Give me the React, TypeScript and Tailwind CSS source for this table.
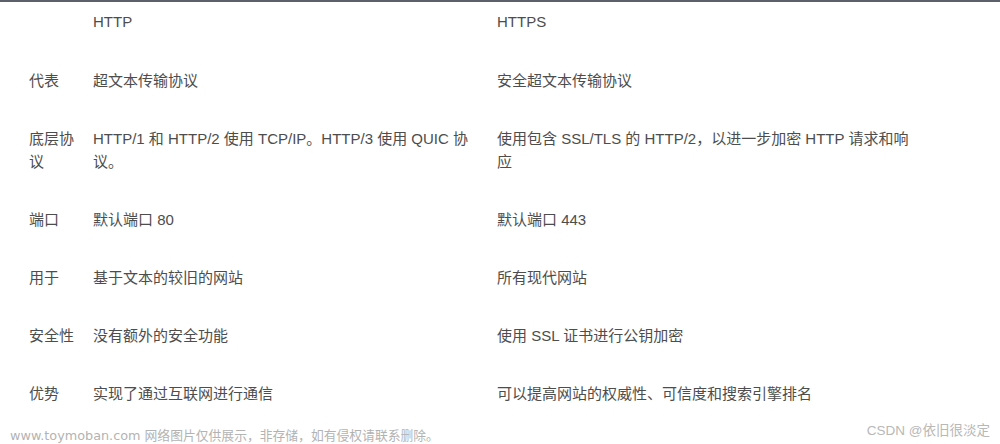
import React from "react";

const rows: [string, string, string][] = [
  ["代表", "超文本传输协议", "安全超文本传输协议"],
  [
    "底层协议",
    "HTTP/1 和 HTTP/2 使用 TCP/IP。HTTP/3 使用 QUIC 协议。",
    "使用包含 SSL/TLS 的 HTTP/2，以进一步加密 HTTP 请求和响应",
  ],
  ["端口", "默认端口 80", "默认端口 443"],
  ["用于", "基于文本的较旧的网站", "所有现代网站"],
  ["安全性", "没有额外的安全功能", "使用 SSL 证书进行公钥加密"],
  ["优势", "实现了通过互联网进行通信", "可以提高网站的权威性、可信度和搜索引擎排名"],
];

export default function App() {
  return (
    <div
      className="relative w-[1000px] h-[444px] overflow-hidden bg-white text-[15px] leading-[23px] text-[#4d4d4d]"
      style={{ fontFamily: '"Liberation Sans", Arial, "Noto Sans CJK SC", sans-serif' }}
    >
      <div className="h-[2px] bg-[#5b606b]" />
      <div className="pl-[29px]">
        <div className="grid grid-cols-[64px_404px_1fr] pt-[8px] pb-[18px]">
          <div />
          <div>HTTP</div>
          <div>HTTPS</div>
        </div>
        {rows.map((r, i) => (
          <div key={i} className="grid grid-cols-[64px_404px_1fr] pt-[18px] pb-[17px]">
            <div className="w-[46px] break-all">{r[0]}</div>
            <div className="w-[381px]">{r[1]}</div>
            <div className="w-[416px]">{r[2]}</div>
          </div>
        ))}
      </div>
      <div
        className="absolute left-[10px] top-[427px] text-[12.8px] leading-[18px] text-[#b3b3b3]"
        style={{ fontFamily: '"DejaVu Sans", "Noto Sans CJK SC", sans-serif' }}
      >
        www.toymoban.com 网络图片仅供展示，非存储，如有侵权请联系删除。
      </div>
      <div className="absolute right-[10px] top-[421px] text-[13.5px] leading-[20px] text-[#b8b8b8]">
        CSDN @依旧很淡定
      </div>
    </div>
  );
}
